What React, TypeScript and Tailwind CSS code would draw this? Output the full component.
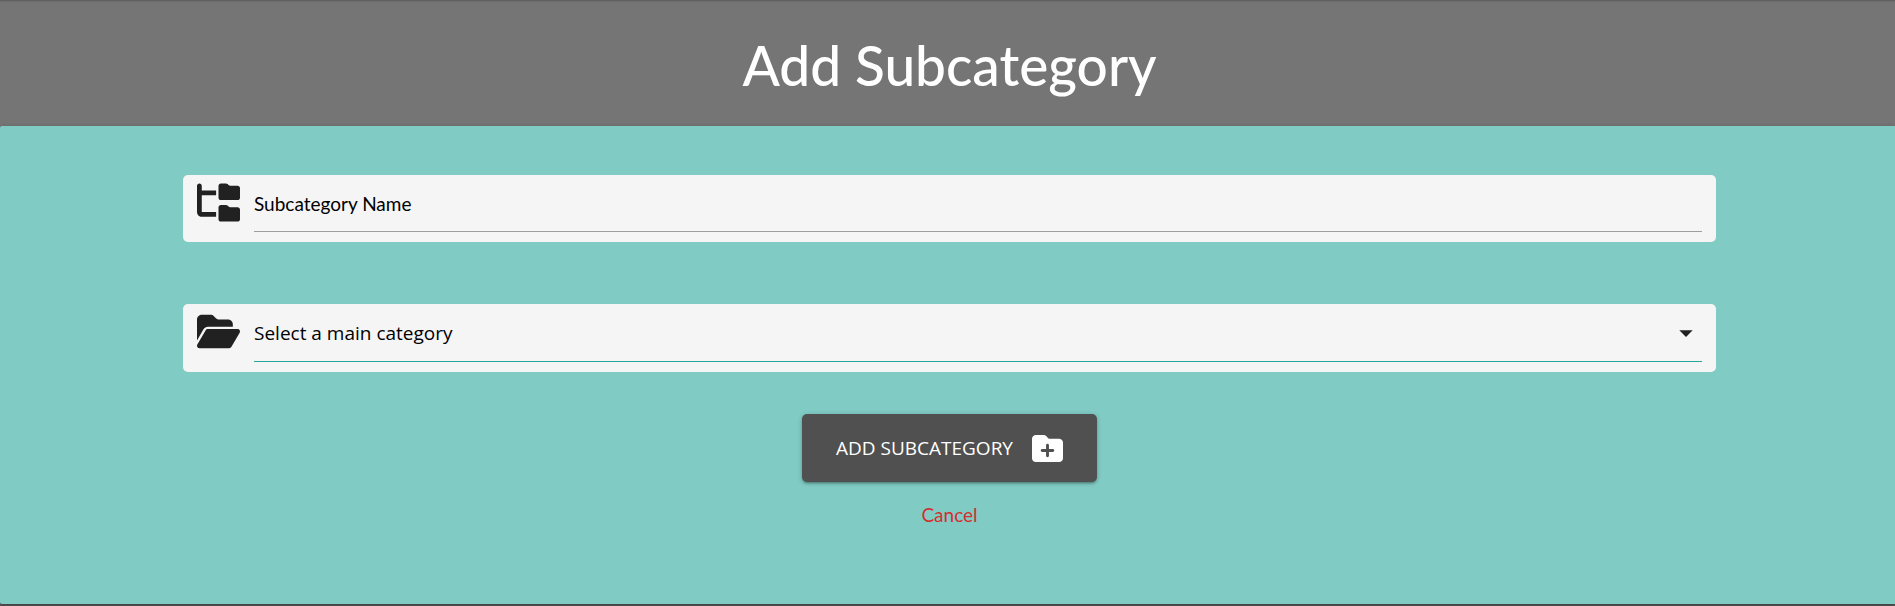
import { useState } from "react";
import { FaFolderOpen, FaFolderPlus, FaFolderTree } from "react-icons/fa6";

function CategoryForm() {
  const [name, setName] = useState("");

  return (
    <form
      className="flex flex-col items-center pt-[49px] pr-[179px] pb-[74px] pl-[183px]"
      onSubmit={(event) => event.preventDefault()}
    >
      <div className="flex h-[67px] w-full gap-3.5 rounded-[5px] bg-[#f5f5f5] px-3.5">
        <FaFolderTree className="mt-1.5 size-[43px] shrink-0 text-[#212121]" aria-hidden="true" />
        <div className="relative h-[57px] flex-1 border-b border-b-[#9e9e9e]">
          <input
            id="subcategory-name"
            type="text"
            value={name}
            onChange={(event) => setName(event.target.value)}
            className="h-full w-full bg-transparent text-[19px] text-black outline-none"
          />
          {name === "" && (
            <label
              htmlFor="subcategory-name"
              className="absolute top-[13px] left-0 cursor-text text-[19px] leading-8 text-black"
            >
              Subcategory Name
            </label>
          )}
        </div>
      </div>

      <div className="mt-[62px] flex h-[68px] w-full gap-3.5 rounded-[5px] bg-[#f5f5f5] px-3.5">
        <FaFolderOpen className="mt-1.5 size-[43px] shrink-0 text-[#212121]" aria-hidden="true" />
        <div className="flex h-[58px] flex-1 flex-col">
          <div className="relative flex-1">
            <select
              aria-label="Main category"
              defaultValue=""
              className="h-full w-full cursor-pointer appearance-none bg-transparent pt-0.5 font-['Open_Sans',sans-serif] text-[19px] text-black outline-none"
            >
              <option value="">Select a main category</option>
            </select>
            <svg
              viewBox="0 0 24 24"
              className="pointer-events-none absolute top-[13px] right-0 size-8 fill-[#212121]"
              aria-hidden="true"
            >
              <path d="M7 10l5 5 5-5z" />
            </svg>
          </div>
          <div className="h-px bg-[#26a69a]" />
        </div>
      </div>

      <button
        type="submit"
        className="mt-[42px] flex h-[68px] cursor-pointer items-center gap-[19px] rounded-[5px] bg-[#505050] px-[34px] font-['Open_Sans',sans-serif] text-[19px] text-white shadow-[0_2px_2px_0_rgba(0,0,0,0.14),0_3px_1px_-2px_rgba(0,0,0,0.12),0_1px_5px_0_rgba(0,0,0,0.2)]"
      >
        ADD SUBCATEGORY
        <FaFolderPlus className="size-[31px]" aria-hidden="true" />
      </button>

      <a href="#cancel" className="mt-[18px] text-[19px] leading-[30px] text-[#d32f2f]">
        Cancel
      </a>
    </form>
  );
}

export default function App() {
  return (
    <main className="min-h-screen bg-[#5c5c5c] font-['Lato',sans-serif]">
      <header className="bg-[#757575] pt-[34px] pb-[30px] pl-1 text-center shadow-[inset_0_4px_2px_-3px_rgba(0,0,0,0.25)]">
        <h1 className="text-[55px] leading-[62px] font-medium text-white">Add Subcategory</h1>
      </header>
      <section className="bg-[#757575]">
        <div className="rounded-l-[2px] bg-[#80cbc4] shadow-[0_2px_2px_0_rgba(0,0,0,0.14),0_1px_5px_0_rgba(0,0,0,0.2)]">
          <CategoryForm />
        </div>
      </section>
    </main>
  );
}
